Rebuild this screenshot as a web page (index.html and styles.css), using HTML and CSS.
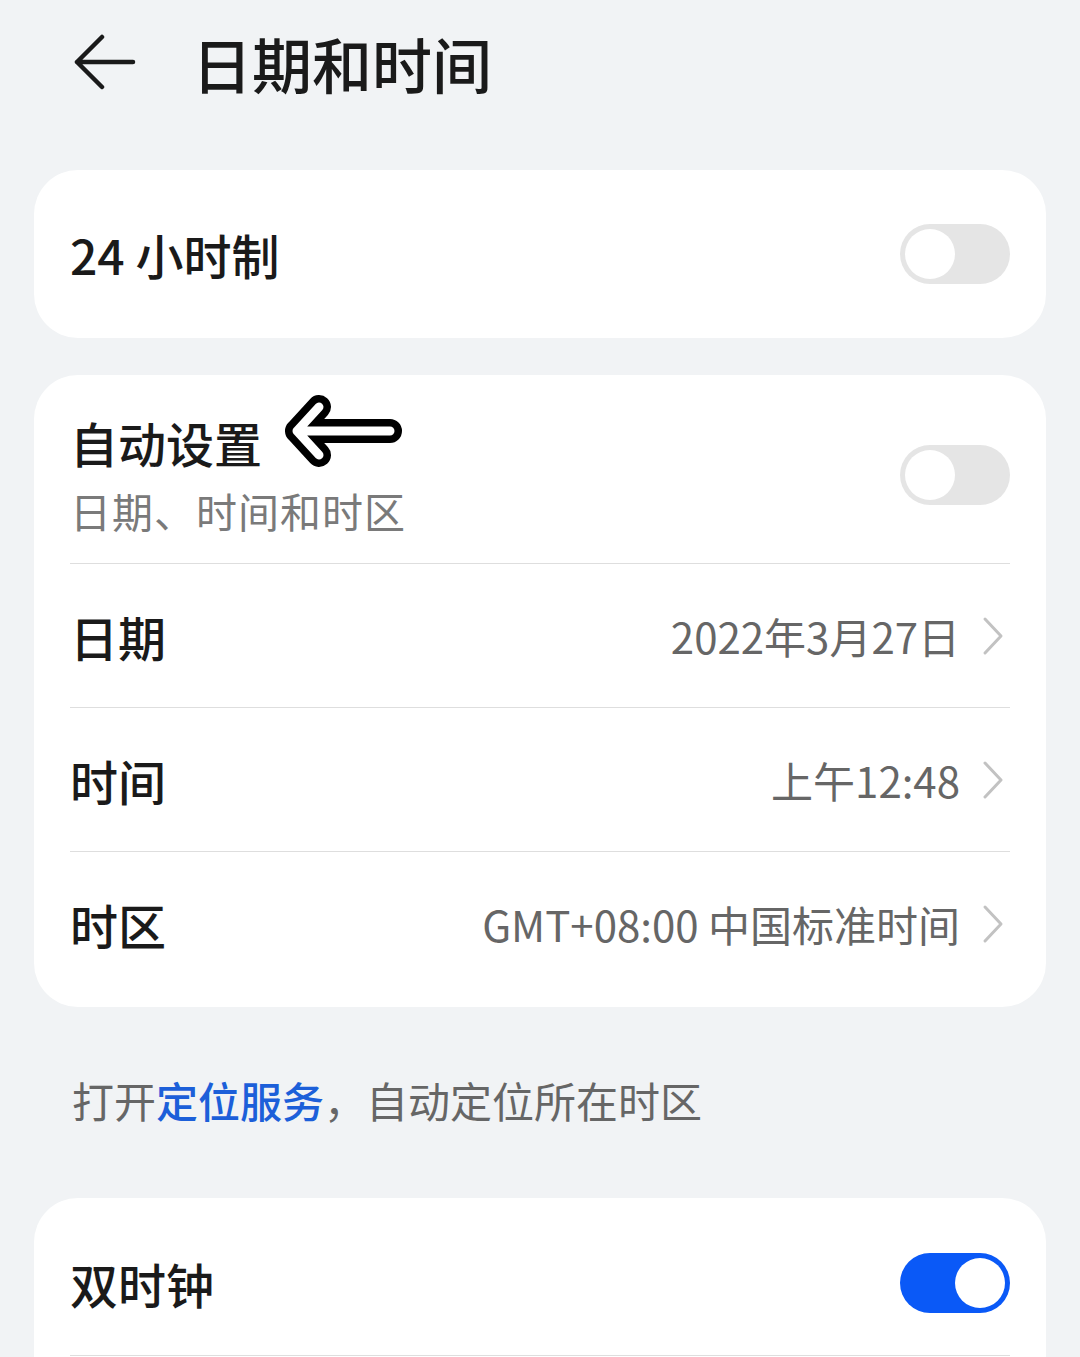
FILE: index.html
```html
<!DOCTYPE html>
<html lang="zh-CN">
<head>
    <meta charset="UTF-8">
    <meta name="viewport" content="width=device-width, initial-scale=1.0">
    <title>日期和时间</title>
    <link rel="stylesheet" href="styles.css">
</head>
<body>
    <div class="header">
        <svg class="back" width="62" height="58" viewBox="0 0 62 58">
            <path d="M28 3 L3 28 L28 53 M3 28 H59" fill="none" stroke="#1a1a1a" stroke-width="4.5" stroke-linecap="round" stroke-linejoin="round"/>
        </svg>
        <h1 class="title">日期和时间</h1>
    </div>

    <div class="card single">
        <div class="row">
            <span class="label">24 小时制</span>
            <span class="switch"><span class="knob"></span></span>
        </div>
    </div>

    <div class="card">
        <div class="row tall">
            <div class="texts">
                <span class="label mark">自动设置
                    <svg class="pointer" width="124" height="84" viewBox="0 0 124 84">
                        <path d="M15 42 L37 18 M15 42 L37 66 M15 42 H108" fill="none" stroke="#000" stroke-width="24" stroke-linecap="round" stroke-linejoin="round"/>
                        <path d="M15 42 L37 18 M15 42 L37 66 M15 42 H108" fill="none" stroke="#fff" stroke-width="9" stroke-linecap="round" stroke-linejoin="round"/>
                    </svg>
                </span>
                <span class="sub">日期、时间和时区</span>
            </div>
            <span class="switch"><span class="knob"></span></span>
        </div>
        <div class="row line">
            <span class="label">日期</span>
            <span class="value">2022年3月27日</span>
            <svg class="chev" width="22" height="40" viewBox="0 0 22 40"><path d="M3 3 L19 20 L3 37" fill="none" stroke="#c2c2c2" stroke-width="3" stroke-linecap="round" stroke-linejoin="round"/></svg>
        </div>
        <div class="row line">
            <span class="label">时间</span>
            <span class="value">上午12:48</span>
            <svg class="chev" width="22" height="40" viewBox="0 0 22 40"><path d="M3 3 L19 20 L3 37" fill="none" stroke="#c2c2c2" stroke-width="3" stroke-linecap="round" stroke-linejoin="round"/></svg>
        </div>
        <div class="row line">
            <span class="label">时区</span>
            <span class="value">GMT+08:00 中国标准时间</span>
            <svg class="chev" width="22" height="40" viewBox="0 0 22 40"><path d="M3 3 L19 20 L3 37" fill="none" stroke="#c2c2c2" stroke-width="3" stroke-linecap="round" stroke-linejoin="round"/></svg>
        </div>
    </div>

    <p class="note">打开<span class="link">定位服务</span>，自动定位所在时区</p>

    <div class="card">
        <div class="row">
            <span class="label">双时钟</span>
            <span class="switch on"><span class="knob"></span></span>
        </div>
        <div class="row line"></div>
    </div>
</body>
</html>
```

FILE: styles.css
```css
body {
    margin: 0;
    background-color: #f1f3f5;
    font-family: "Noto Sans CJK SC", "Noto Sans", sans-serif;
    color: #1a1a1a;
    overflow: hidden;
}
.header {
    display: flex;
    align-items: center;
    height: 126px;
    padding-left: 74px;
}
.back {
    display: block;
}
.title {
    margin: 0 0 0 56px;
    font-size: 60px;
    font-weight: 500;
    line-height: 1;
}
.card {
    margin: 44px 34px 0;
    padding: 12px 36px;
    background-color: #fff;
    border-radius: 44px;
}
.card.single {
    padding: 0 36px;
}
.card.single .row {
    height: 168px;
}
.card + .card {
    margin-top: 37px;
}
.row {
    display: flex;
    align-items: center;
    height: 145px;
    box-sizing: border-box;
}
.row.tall {
    height: 176px;
}
.row.line {
    border-top: 1.5px solid #dedede;
    height: 144px;
}
.texts {
    display: flex;
    flex-direction: column;
    flex: 1;
}
.label {
    flex: 1;
    font-size: 48px;
    font-weight: 500;
    line-height: 54px;
}
.mark {
    position: relative;
}
.pointer {
    position: absolute;
    left: 212px;
    top: -26px;
}
.sub {
    margin-top: 16px;
    font-size: 41px;
    letter-spacing: 1px;
    color: #7a7a7a;
    line-height: 50px;
}
.value {
    font-size: 42px;
    color: #666;
    line-height: 50px;
}
.chev {
    margin-left: 22px;
    margin-right: 6px;
}
.switch {
    position: relative;
    width: 110px;
    height: 60px;
    border-radius: 30px;
    background-color: #e5e5e5;
    flex-shrink: 0;
}
.switch .knob {
    position: absolute;
    top: 5px;
    left: 5px;
    width: 50px;
    height: 50px;
    border-radius: 50%;
    background-color: #fff;
}
.switch.on {
    background-color: #0a59f7;
}
.switch.on .knob {
    left: 55px;
}
.note {
    margin: 68px 0 0 72px;
    font-size: 42px;
    color: #666;
    line-height: 50px;
}
.note + .card {
    margin-top: 73px;
}
.link {
    color: #1c5fd9;
    font-weight: 500;
}
```
